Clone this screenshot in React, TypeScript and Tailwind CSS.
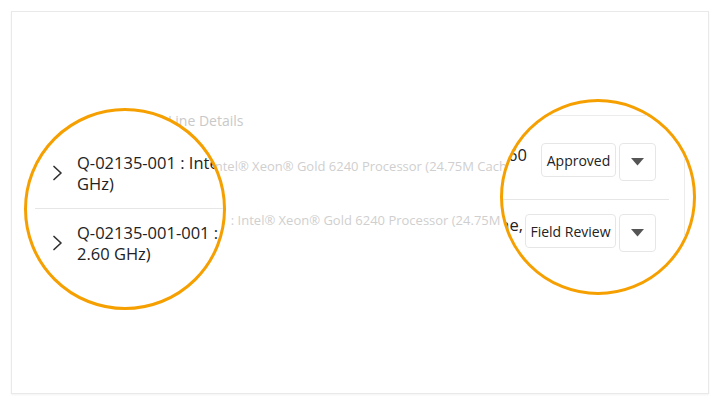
import React from 'react';

const font = { fontFamily: '"Open Sans", "Noto Sans", sans-serif' };

const Chevron = () => (
  <svg width="12" height="16" viewBox="0 0 12 16" className="shrink-0">
    <polyline points="2,1.5 9,8 2,14.5" fill="none" stroke="#333333" strokeWidth="1.7" strokeLinecap="round" strokeLinejoin="round" />
  </svg>
);

const Caret = () => (
  <svg width="13" height="8" viewBox="0 0 13 8">
    <polygon points="0,0 13,0 6.5,7.5" fill="#555555" />
  </svg>
);

export default function App() {
  return (
    <div className="relative w-[720px] h-[405px] bg-white p-[11px]" style={font}>
      {/* faded base layer */}
      <div className="w-full h-full border border-[#e9e9e9] shadow-[0_1px_2px_rgba(0,0,0,0.05)] overflow-hidden">
        <div className="pt-[99px]">
          <div className="ml-[156px] text-[14px] leading-[20px] text-[#c9c9c9]">Line Details</div>
          <div className="mt-[26px] ml-[111px] text-[13px] leading-[18px] text-[#cfcfcf] whitespace-nowrap">
            Q-02135-001 : Intel® Xeon® Gold 6240 Processor (24.75M Cache, 2.60 GHz)
          </div>
          <div className="mt-[36px] ml-[111px] text-[13px] leading-[18px] text-[#cfcfcf] whitespace-nowrap">
            Q-02135-001-001 : Intel® Xeon® Gold 6240 Processor (24.75M Cache, 2.60 GHz)
          </div>
        </div>
      </div>

      {/* left lens */}
      <div className="absolute left-[24px] top-[108px] w-[202px] h-[202px] rounded-full border-[3px] border-[#F5A000] bg-white overflow-hidden">
        <div className="w-[400px] text-[16.5px] leading-[21px] text-[#222222]">
          <div className="ml-[8px] pl-[17px] pt-[41px] pb-[14px] border-b border-[#e6e6e6] flex items-center">
            <Chevron />
            <div className="ml-[13px] whitespace-nowrap">
              <div>Q-02135-001 : Intel® Xeon® Gold 6240 Processor (24.75M Cache, 2.60</div>
              <div>GHz)</div>
            </div>
          </div>
          <div className="ml-[8px] pl-[17px] pt-[13px] flex items-center">
            <Chevron />
            <div className="ml-[13px] whitespace-nowrap">
              <div>Q-02135-001-001 : Intel® Xeon® Gold 6240 Processor (24.75M Cache,</div>
              <div>2.60 GHz)</div>
            </div>
          </div>
        </div>
      </div>

      {/* right lens */}
      <div className="absolute left-[500px] top-[99px] w-[196px] h-[196px] rounded-full border-[3px] border-[#F5A000] bg-white overflow-hidden">
        <div className="pt-[13px]">
          <div className="w-[182px] h-[200px] border-t border-r border-[#ececec] rounded-tr-[6px]">
            <div className="mr-[15px] pt-[27px] pb-[18px] border-b border-[#e6e6e6] flex items-start">
              <div className="w-[24px] flex justify-end mt-[1px] text-[16.5px] leading-[21px] text-[#222222] whitespace-nowrap">
                <span>Intel® Xeon® Gold 6240 Processor (24.75M Cache, 2.60</span>
              </div>
              <div className="ml-[14px] w-[75px] h-[34px] border border-[#e6e6e6] rounded-[4px] flex items-center justify-center text-[14px] text-[#222222]">
                Approved
              </div>
              <div className="ml-[3px] w-[37px] h-[38px] border border-[#e6e6e6] rounded-[4px] flex items-center justify-center">
                <Caret />
              </div>
            </div>
            <div className="mr-[15px] pt-[14px] flex items-start">
              <div className="w-[20px] flex justify-end text-[16.5px] leading-[21px] text-[#222222] whitespace-nowrap">
                <span>Intel® Xeon® Gold 6240 Processor (24.75M Cache,</span>
              </div>
              <div className="ml-[2px] w-[91px] h-[34px] border border-[#e6e6e6] rounded-[4px] flex items-center justify-center text-[14px] text-[#222222]">
                Field Review
              </div>
              <div className="ml-[3px] w-[37px] h-[38px] border border-[#e6e6e6] rounded-[4px] flex items-center justify-center">
                <Caret />
              </div>
            </div>
          </div>
        </div>
      </div>
    </div>
  );
}
